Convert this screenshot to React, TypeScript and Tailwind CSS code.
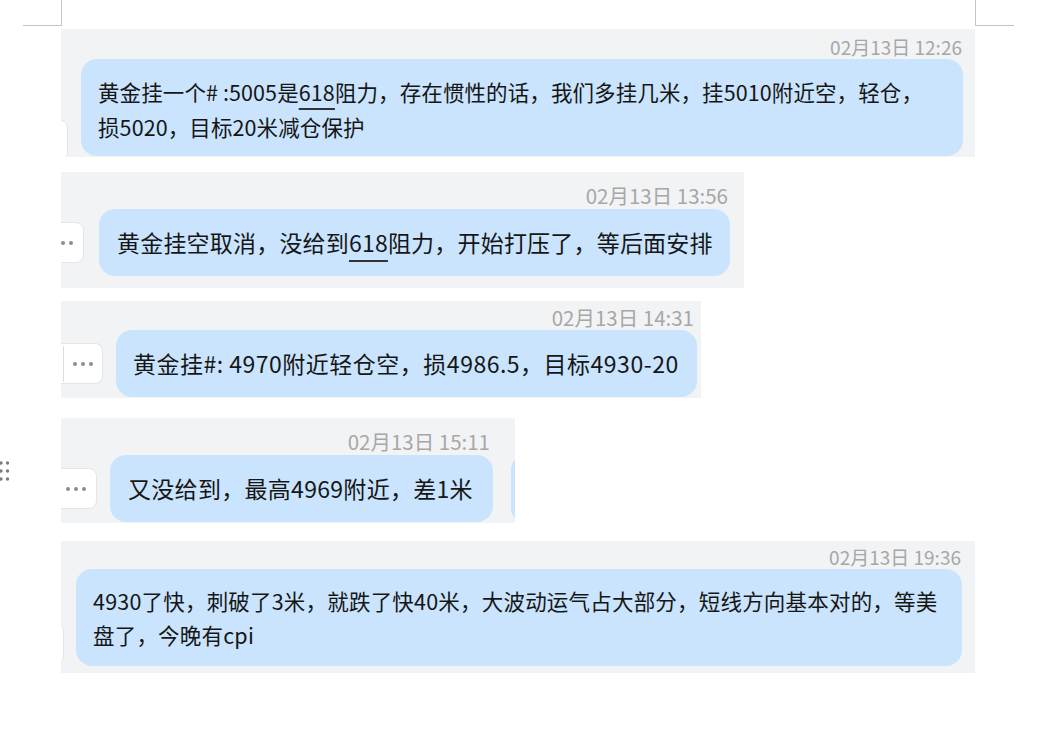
const bubble = "bg-[#c9e4fc] rounded-[16px] whitespace-nowrap shrink-0"
const shot = "bg-[#f2f3f5] overflow-hidden flex flex-col shrink-0"

function Dots() {
  return (
    <div className="flex gap-[4px]">
      <span className="w-[4px] h-[4px] rounded-full bg-[#8a8d93]" />
      <span className="w-[4px] h-[4px] rounded-full bg-[#8a8d93]" />
      <span className="w-[4px] h-[4px] rounded-full bg-[#8a8d93]" />
    </div>
  )
}

function Grip() {
  return (
    <svg width="10" height="20" viewBox="0 0 10 20">
      {[2, 10, 18].map((cy) => (
        <g key={cy} fill="#7d7d7d">
          <circle cx="1" cy={cy} r="1.7" />
          <circle cx="7.5" cy={cy} r="1.7" />
        </g>
      ))}
    </svg>
  )
}

export default function App() {
  return (
    <div className="w-[1063px] min-h-[735px] bg-white text-[#161616] font-['Microsoft_YaHei','Noto_Sans_CJK_SC',sans-serif]">
      {/* page corner marks */}
      <div className="flex h-[26px]">
        <div className="ml-[23px] w-[39px] border-r border-b border-[#c4c4c4]" />
        <div className="ml-[913px] w-[39px] border-l border-b border-[#c4c4c4]" />
      </div>

      <div className="mt-[3px] flex flex-col">
        {/* 12:26 */}
        <div className="flex">
          <div className="w-[61px] shrink-0" />
          <div className={`${shot} w-[914px] h-[128px]`}>
            <div className="pt-[6px] pr-[13px] text-right text-[19px] leading-[24px] text-[#a7a7a7]">02月13日 12:26</div>
            <div className="flex items-end">
              <div className="-ml-[35px] mr-[13px] -mb-[5px] w-[42px] h-[41px] shrink-0 rounded-[8px] bg-white border border-[#e4e5e8]" />
              <div className={`${bubble} w-[882px] h-[97px] pl-[17px] pt-[15px] text-[21.5px] leading-[35px] tracking-[0.1px]`}>
                黄金挂一个# :5005是<span className="underline decoration-[#333] decoration-2 underline-offset-[7px]">618</span>阻力，存在惯性的话，我们多挂几米，挂5010附近空，轻仓，
                <br />
                损5020，目标20米减仓保护
              </div>
            </div>
          </div>
        </div>

        {/* 13:56 */}
        <div className="flex mt-[15px]">
          <div className="w-[61px] shrink-0" />
          <div className={`${shot} w-[683px] h-[116px]`}>
            <div className="pt-[11px] pr-[16px] text-right text-[20.5px] leading-[24px] text-[#a7a7a7]">02月13日 13:56</div>
            <div className="mt-[2px] flex items-center">
              <div className="-ml-[19px] mr-[15px] w-[42px] h-[41px] shrink-0 rounded-[8px] bg-white border border-[#e4e5e8] flex items-center justify-center">
                <Dots />
              </div>
              <div className={`${bubble} w-[631px] h-[67px] pl-[18px] flex items-center text-[23px] tracking-[0.2px]`}>
                <span>
                  黄金挂空取消，没给到<span className="underline decoration-[#333] decoration-2 underline-offset-[8px]">618</span>阻力，开始打压了，等后面安排
                </span>
              </div>
            </div>
          </div>
        </div>

        {/* 14:31 */}
        <div className="flex mt-[13px]">
          <div className="w-[61px] shrink-0" />
          <div className={`${shot} w-[640px] h-[97px]`}>
            <div className="pt-[4px] pr-[7px] text-right text-[20.5px] leading-[24px] text-[#a7a7a7]">02月13日 14:31</div>
            <div className="mt-[1px] flex items-center">
              <div className="mr-[13px] w-[42px] h-[41px] shrink-0 rounded-r-[8px] bg-white border border-l-0 border-[#e4e5e8] flex items-center">
                <div className="ml-[2px] w-px h-[36px] bg-[#dcdde0]" />
                <div className="flex-1 flex justify-center">
                  <Dots />
                </div>
              </div>
              <div className={`${bubble} w-[581px] h-[67px] pl-[17px] flex items-center text-[23px] tracking-[0.5px]`}>
                黄金挂#: 4970附近轻仓空，损4986.5，目标4930-20
              </div>
            </div>
          </div>
        </div>

        {/* 15:11 */}
        <div className="flex mt-[20px]">
          <div className="w-[61px] shrink-0 flex items-center">
            <Grip />
          </div>
          <div className={`${shot} w-[454px] h-[105px]`}>
            <div className="pt-[11px] pr-[25px] text-right text-[20.5px] leading-[24px] text-[#a7a7a7]">02月13日 15:11</div>
            <div className="mt-[2px] flex items-center">
              <div className="-ml-[6px] mr-[13px] w-[42px] h-[41px] shrink-0 rounded-[8px] bg-white border border-[#e4e5e8] flex items-center justify-center">
                <Dots />
              </div>
              <div className={`${bubble} w-[383px] h-[67px] pl-[18px] flex items-center text-[23px] tracking-[0.3px]`}>
                又没给到，最高4969附近，差1米
              </div>
              <div className="ml-[18px] w-[24px] h-[64px] shrink-0 rounded-[14px] bg-[#c9e4fc]" />
            </div>
          </div>
        </div>

        {/* 19:36 */}
        <div className="flex mt-[18px]">
          <div className="w-[61px] shrink-0" />
          <div className={`${shot} w-[914px] h-[132px]`}>
            <div className="pt-[4px] pr-[14px] text-right text-[19px] leading-[24px] text-[#a7a7a7]">02月13日 19:36</div>
            <div className="flex items-end">
              <div className="-ml-[39px] mr-[12px] mb-[2px] w-[42px] h-[41px] shrink-0 rounded-[8px] bg-white border border-[#e4e5e8]" />
              <div className={`${bubble} w-[886px] h-[97px] pl-[17px] pt-[15px] text-[21.5px] leading-[34px] tracking-[0.2px]`}>
                4930了快，刺破了3米，就跌了快40米，大波动运气占大部分，短线方向基本对的，等美
                <br />
                盘了，今晚有cpi
              </div>
            </div>
          </div>
        </div>
      </div>
    </div>
  )
}
